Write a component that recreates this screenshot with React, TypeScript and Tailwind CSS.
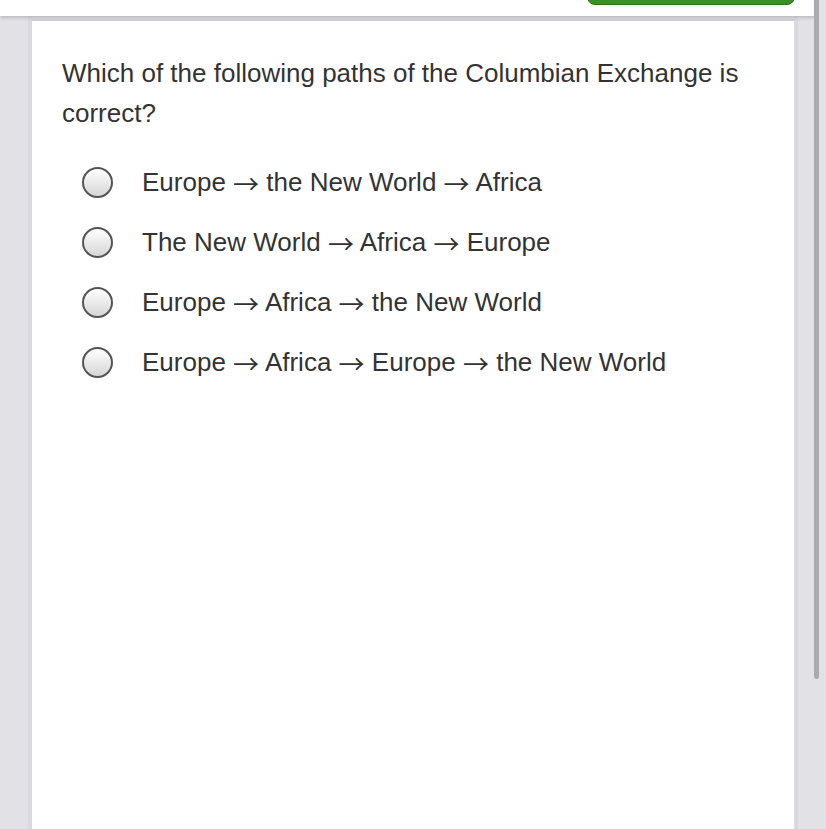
import React from "react";

const options = [
  ["Europe", "the New World", "Africa"],
  ["The New World", "Africa", "Europe"],
  ["Europe", "Africa", "the New World"],
  ["Europe", "Africa", "Europe", "the New World"],
];

function Arrow() {
  return (
    <span
      className="text-[26px] leading-[0] relative top-[3px]"
      style={{ fontFamily: '"Noto Sans CJK JP", "DejaVu Sans", sans-serif' }}
    >
      {"\u2192"}
    </span>
  );
}

export default function App() {
  return (
    <div
      className="relative w-[826px] h-[829px] overflow-hidden bg-[#e1e1e6]"
      style={{ fontFamily: '"Liberation Sans", Arial, sans-serif' }}
    >
      {/* header */}
      <div className="absolute left-0 top-0 w-[816px] h-[16px] bg-white shadow-[0_2px_3px_rgba(0,0,0,0.16)] z-10">
        <div className="absolute left-[587px] top-[-30px] w-[208px] h-[35px] rounded-[8px] bg-[#3a8f26] border border-[#2c7519]" />
      </div>
      {/* scrollbar */}
      <div className="absolute left-[814px] top-0 w-[5px] h-[679px] bg-[#a9a9ae] rounded-b-[3px] z-20" />
      <div className="flex h-full">
        <div className="w-[32px] shrink-0 border-r-[4px] border-[#d9d9df]" />
        <div className="w-[762px] shrink-0 bg-white mt-[19px] border-t-[2px] border-[#d0d0d4] pt-[32px] px-[30px] text-[#333333]">
          <p className="text-[26px] leading-[40px]">
            Which of the following paths of the Columbian Exchange is correct?
          </p>
          <div className="mt-[32px] flex flex-col gap-[25px] pl-[20px]">
            {options.map((o, i) => (
              <div key={i} className="flex items-center h-[35px]">
                <div className="w-[31px] h-[31px] rounded-full border-[2px] border-[#555] bg-gradient-to-b from-[#ffffff] to-[#d6d6d6] shrink-0" />
                <span className="ml-[29px] text-[26px] leading-[35px] whitespace-pre">
                  {o.map((p, j) => (
                    <React.Fragment key={j}>
                      {j > 0 && (
                        <>
                          {" "}
                          <Arrow />{" "}
                        </>
                      )}
                      {p}
                    </React.Fragment>
                  ))}
                </span>
              </div>
            ))}
          </div>
        </div>
        <div className="flex-1 border-l-[4px] border-[#d9d9df]" />
      </div>
    </div>
  );
}
